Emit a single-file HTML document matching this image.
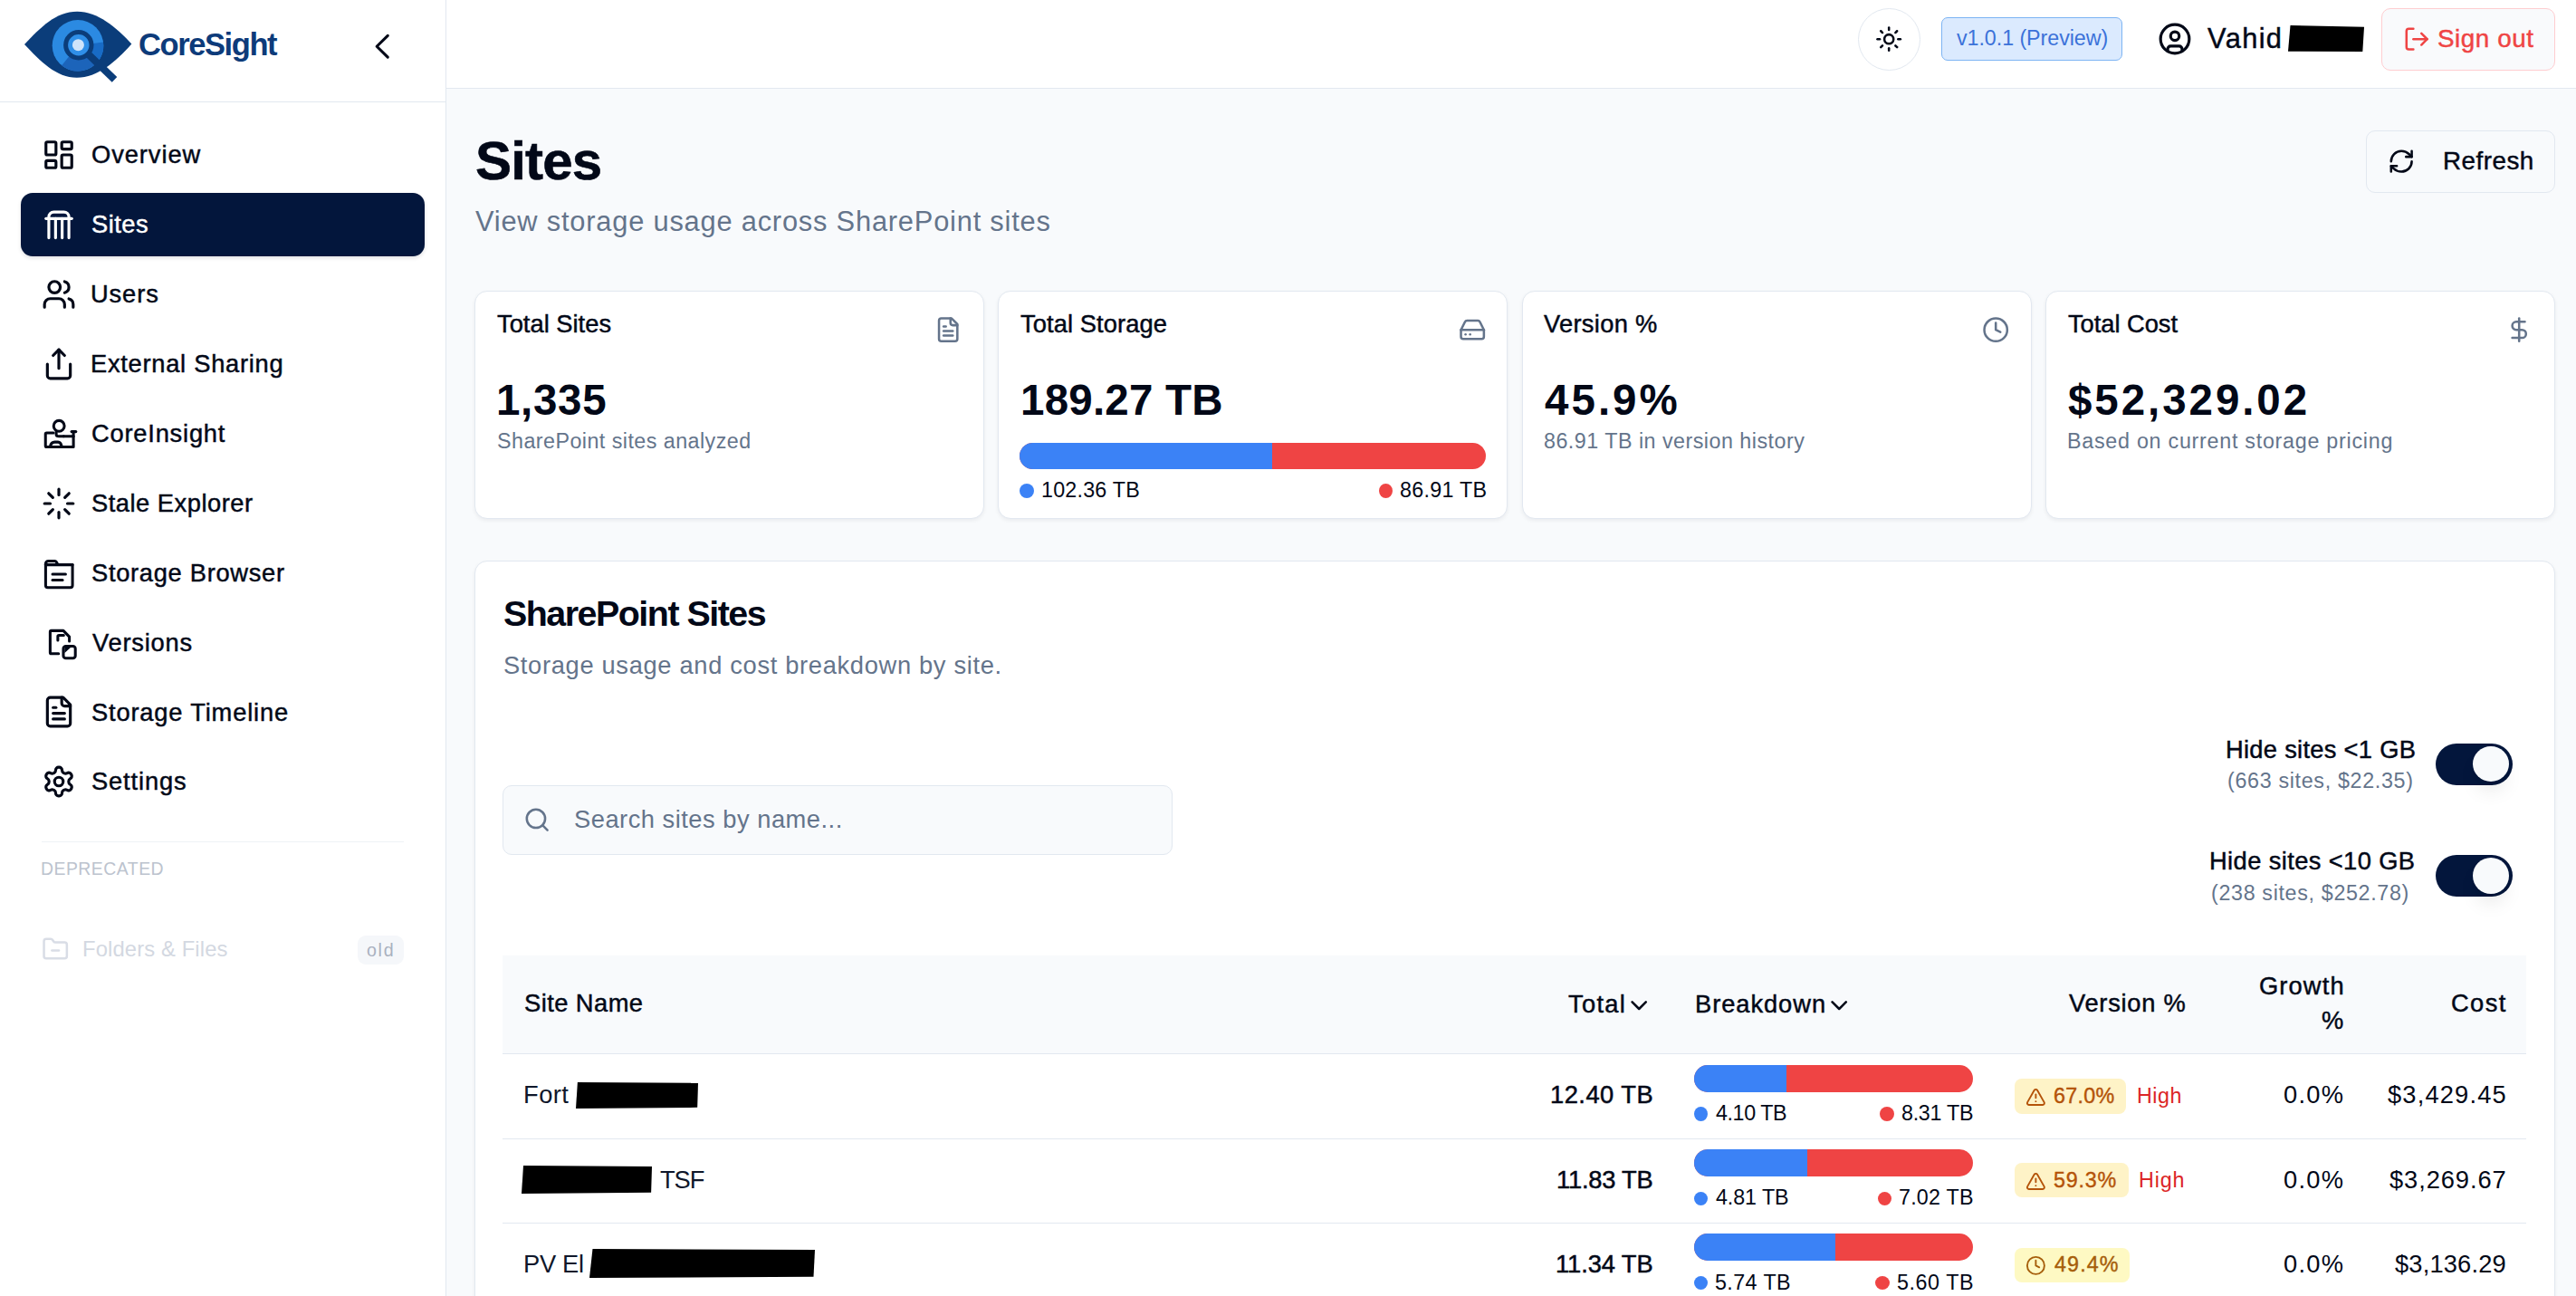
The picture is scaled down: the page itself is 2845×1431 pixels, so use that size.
<!DOCTYPE html>
<html lang="en"><head><meta charset="utf-8"><title>CoreSight – Sites</title>
<style>
*{box-sizing:border-box;margin:0;padding:0}
html,body{width:2845px;height:1431px;overflow:hidden;background:#f8fafc}
body{position:relative;font-family:"Liberation Sans", Arial, sans-serif;color:#020817}
aside,header,main,nav,section,div,a,button,svg,.t{position:absolute;display:block}
button{font:inherit;cursor:pointer}
a{text-decoration:none;color:inherit}
.t{white-space:pre;line-height:1;font-family:"Liberation Sans", Arial, sans-serif}
main{overflow:hidden}
</style></head>
<body>
<aside style="left:0px;top:0px;width:493px;height:1431px;background:#fff;border-right:1px solid #e2e8f0;">
<div style="left:0px;top:0px;width:492px;height:113px;border-bottom:1px solid #e2e8f0;">
<svg style="left:20px;top:5px;color:#020817;" width="135" height="90" viewBox="20 5 135 90" fill="none" stroke="none" stroke-width="0" stroke-linecap="round" stroke-linejoin="round"><path d="M27 49C45 30 62 12.8 85.2 12.8C108 12.8 128 30 145.3 48.5C128 68 108 85.7 84.8 85.7C62 85.7 45 68 27 49Z" fill="#0b3d7a"/><circle cx="86" cy="50.3" r="28.3" fill="#2b8ae2"/><path d="M86 50.3L114 46.4A28.3 28.3 0 0 1 107.7 68.5Z" fill="#186bc6"/><path d="M86 50.3L107.7 68.5A28.3 28.3 0 0 1 68.2 72.3Z" fill="#1c64ba"/><circle cx="86.8" cy="49.7" r="14.2" fill="#2f8fe8" stroke="#0b3d7a" stroke-width="5"/><circle cx="86.4" cy="49.7" r="6.5" fill="#cfe4fa"/><path d="M98.5 61L123.6 85.2" stroke="#0b3d7a" stroke-width="8" stroke-linecap="square" stroke-linejoin="round" fill="none"/></svg>
<span class="t" style="left:153px;top:32px;font-size:34.5px;font-weight:700;color:#0d3b7a;letter-spacing:-1.413px;">CoreSight</span>
<svg style="left:400px;top:30px;color:#020817;" width="44" height="44" viewBox="400 30 44 44" fill="none" stroke="currentColor" stroke-width="3.1" stroke-linecap="round" stroke-linejoin="round"><path d="M428.25 39.45L416.15 51.25L428.25 63.05"/></svg>
</div>
<nav style="left:0px;top:113px;width:492px;height:800px;">
<a style="left:23px;top:23px;width:446px;height:70px;border-radius:13px;">
<svg style="left:23px;top:16px;color:#020817;" width="38" height="38" viewBox="0 0 24 24" fill="none" stroke="currentColor" stroke-width="2" stroke-linecap="round" stroke-linejoin="round"><rect width="7" height="9" x="3" y="3" rx="1"/><rect width="7" height="5" x="14" y="3" rx="1"/><rect width="7" height="9" x="14" y="12" rx="1"/><rect width="7" height="5" x="3" y="16" rx="1"/></svg>
<span class="t" style="left:78px;top:21px;font-size:27.3px;font-weight:500;color:#020817;letter-spacing:0.929px;-webkit-text-stroke:0.45px #020817;">Overview</span>
</a>
<a style="left:23px;top:100px;width:446px;height:70px;border-radius:13px;background:#03163c;box-shadow:0 2px 4px rgba(2,8,23,.12);">
<svg style="left:23px;top:15.9px;color:#ffffff;" width="38" height="38" viewBox="0 0 24 24" fill="none" stroke="currentColor" stroke-width="2" stroke-linecap="round" stroke-linejoin="round"><path d="M5 21.2V6.7A3.5 3.5 0 0 1 8.5 3.2h7A3.5 3.5 0 0 1 19 6.7V21.2"/><path d="M3 7.8h18"/><path d="M9.7 7.8V21.2"/><path d="M14.3 7.8V21.2"/></svg>
<span class="t" style="left:78px;top:21px;font-size:27.3px;font-weight:500;color:#ffffff;letter-spacing:0.500px;-webkit-text-stroke:0.45px #ffffff;">Sites</span>
</a>
<a style="left:23px;top:177px;width:446px;height:70px;border-radius:13px;">
<svg style="left:23px;top:15.8px;color:#020817;" width="38" height="38" viewBox="0 0 24 24" fill="none" stroke="currentColor" stroke-width="2" stroke-linecap="round" stroke-linejoin="round"><path d="M16 21v-2a4 4 0 0 0-4-4H6a4 4 0 0 0-4 4v2"/><circle cx="9" cy="7" r="4"/><path d="M22 21v-2a4 4 0 0 0-3-3.87"/><path d="M16 3.13a4 4 0 0 1 0 7.75"/></svg>
<span class="t" style="left:77px;top:21px;font-size:27.3px;font-weight:500;color:#020817;letter-spacing:0.875px;-webkit-text-stroke:0.45px #020817;">Users</span>
</a>
<a style="left:23px;top:254px;width:446px;height:70px;border-radius:13px;">
<svg style="left:23px;top:15.7px;color:#020817;" width="38" height="38" viewBox="0 0 24 24" fill="none" stroke="currentColor" stroke-width="2" stroke-linecap="round" stroke-linejoin="round"><path d="M4 12v8a2 2 0 0 0 2 2h12a2 2 0 0 0 2-2v-8"/><polyline points="16 6 12 2 8 6"/><line x1="12" x2="12" y1="2" y2="15"/></svg>
<span class="t" style="left:77px;top:21px;font-size:27.3px;font-weight:500;color:#020817;letter-spacing:0.720px;-webkit-text-stroke:0.45px #020817;">External Sharing</span>
</a>
<a style="left:23px;top:331px;width:446px;height:70px;border-radius:13px;">
<svg style="left:23.12px;top:17.26px;color:#020817;" width="39.87" height="34.78" viewBox="95 130 235 205" fill="none" stroke="currentColor" stroke-width="18" stroke-linecap="round" stroke-linejoin="round"><circle cx="208" cy="185" r="35"/><path d="M172 230H128a8 8 0 0 0-8 8v76a8 8 0 0 0 8 8h174V222"/><path d="M290 222h28"/><path d="M238 252h64"/><path d="M150 320c4-18 14-30 30-30h22c12 0 20 12 24 30"/><path d="M190 222v18c0 8 8 12 18 12h30"/></svg>
<span class="t" style="left:78px;top:21px;font-size:27.3px;font-weight:500;color:#020817;letter-spacing:0.780px;-webkit-text-stroke:0.45px #020817;">CoreInsight</span>
</a>
<a style="left:23px;top:407px;width:446px;height:70px;border-radius:13px;">
<svg style="left:23px;top:16.5px;color:#020817;" width="38" height="38" viewBox="0 0 24 24" fill="none" stroke="currentColor" stroke-width="2" stroke-linecap="round" stroke-linejoin="round"><path d="M12 2v4"/><path d="m16.2 7.8 2.9-2.9"/><path d="M18 12h4"/><path d="m16.2 16.2 2.9 2.9"/><path d="M12 18v4"/><path d="m4.9 19.1 2.9-2.9"/><path d="M2 12h4"/><path d="m4.9 4.9 2.9 2.9"/></svg>
<span class="t" style="left:78px;top:22px;font-size:27.3px;font-weight:500;color:#020817;letter-spacing:0.508px;-webkit-text-stroke:0.45px #020817;">Stale Explorer</span>
</a>
<a style="left:23px;top:484px;width:446px;height:70px;border-radius:13px;">
<svg style="left:23.97px;top:20.15px;color:#020817;" width="36.48" height="34.78" viewBox="100 1040 215 205" fill="none" stroke="currentColor" stroke-width="18" stroke-linecap="round" stroke-linejoin="round"><path d="M120 1085v-12a18 18 0 0 1 18-18h42a12 12 0 0 1 10 6l10 17h95v135a14 14 0 0 1-14 14H134a14 14 0 0 1-14-14z"/><path d="M120 1079h175"/><path d="M165 1140h85"/><path d="M165 1178h65"/></svg>
<span class="t" style="left:78px;top:22px;font-size:27.3px;font-weight:500;color:#020817;letter-spacing:0.693px;-webkit-text-stroke:0.45px #020817;">Storage Browser</span>
</a>
<a style="left:23px;top:561px;width:446px;height:70px;border-radius:13px;">
<svg style="left:29.06px;top:19.2px;color:#020817;" width="33.93" height="36.48" viewBox="130 135 200 215" fill="none" stroke="currentColor" stroke-width="18" stroke-linecap="round" stroke-linejoin="round"><path d="M205 305h-47a8 8 0 0 1-8-8V163a8 8 0 0 1 8-8h78l39 40v28"/><path d="M200 218v-25a8 8 0 0 1 8-8h30"/><rect x="236" y="256" width="78" height="78" rx="16"/><path d="M244 300l44-40h-30a14 14 0 0 0-14 14z" fill="currentColor" stroke="none"/></svg>
<span class="t" style="left:79px;top:22px;font-size:27.3px;font-weight:500;color:#020817;letter-spacing:0.771px;-webkit-text-stroke:0.45px #020817;">Versions</span>
</a>
<a style="left:23px;top:638px;width:446px;height:70px;border-radius:13px;">
<svg style="left:23px;top:16.2px;color:#020817;" width="38" height="38" viewBox="0 0 24 24" fill="none" stroke="currentColor" stroke-width="2" stroke-linecap="round" stroke-linejoin="round"><path d="M15 2H6a2 2 0 0 0-2 2v16a2 2 0 0 0 2 2h12a2 2 0 0 0 2-2V7Z"/><path d="M14 2v4a2 2 0 0 0 2 2h4"/><path d="M10 9H8"/><path d="M16 13H8"/><path d="M16 17H8"/></svg>
<span class="t" style="left:78px;top:22px;font-size:27.3px;font-weight:500;color:#020817;letter-spacing:0.820px;-webkit-text-stroke:0.45px #020817;">Storage Timeline</span>
</a>
<a style="left:23px;top:715px;width:446px;height:70px;border-radius:13px;">
<svg style="left:23px;top:16.1px;color:#020817;" width="38" height="38" viewBox="0 0 24 24" fill="none" stroke="currentColor" stroke-width="2" stroke-linecap="round" stroke-linejoin="round"><path d="M12.22 2h-.44a2 2 0 0 0-2 2v.18a2 2 0 0 1-1 1.73l-.43.25a2 2 0 0 1-2 0l-.15-.08a2 2 0 0 0-2.73.73l-.22.38a2 2 0 0 0 .73 2.73l.15.1a2 2 0 0 1 1 1.72v.51a2 2 0 0 1-1 1.74l-.15.09a2 2 0 0 0-.73 2.73l.22.38a2 2 0 0 0 2.73.73l.15-.08a2 2 0 0 1 2 0l.43.25a2 2 0 0 1 1 1.73V20a2 2 0 0 0 2 2h.44a2 2 0 0 0 2-2v-.18a2 2 0 0 1 1-1.73l.43-.25a2 2 0 0 1 2 0l.15.08a2 2 0 0 0 2.73-.73l.22-.39a2 2 0 0 0-.73-2.73l-.15-.08a2 2 0 0 1-1-1.74v-.5a2 2 0 0 1 1-1.74l.15-.09a2 2 0 0 0 .73-2.73l-.22-.38a2 2 0 0 0-2.73-.73l-.15.08a2 2 0 0 1-2 0l-.43-.25a2 2 0 0 1-1-1.73V4a2 2 0 0 0-2-2z"/><circle cx="12" cy="12" r="3"/></svg>
<span class="t" style="left:78px;top:21px;font-size:27.3px;font-weight:500;color:#020817;letter-spacing:0.857px;-webkit-text-stroke:0.45px #020817;">Settings</span>
</a>
</nav>
<div style="left:46px;top:929px;width:400px;height:1px;background:#eef2f6;"></div>
<span class="t" style="left:45px;top:950px;font-size:19.4px;font-weight:500;color:#bcc3ce;letter-spacing:0.500px;">DEPRECATED</span>
<a style="left:23px;top:1013px;width:446px;height:70px;border-radius:14px;">
<svg style="left:23px;top:20.1px;color:#d9dde6;" width="30.4" height="30.4" viewBox="0 0 24 24" fill="none" stroke="currentColor" stroke-width="2" stroke-linecap="round" stroke-linejoin="round"><path d="M9 13h6"/><path d="M20 20a2 2 0 0 0 2-2V8a2 2 0 0 0-2-2h-7.9a2 2 0 0 1-1.69-.9L9.6 3.9A2 2 0 0 0 7.93 3H4a2 2 0 0 0-2 2v13a2 2 0 0 0 2 2Z"/></svg>
<span class="t" style="left:68px;top:23px;font-size:23.8px;font-weight:400;color:#d3d8e1;letter-spacing:0.121px;">Folders &amp; Files</span>
<div style="left:372px;top:20px;width:51px;height:32px;background:#f5f7fa;border-radius:9px;"></div>
<span class="t" style="left:382px;top:27px;font-size:19.6px;font-weight:400;color:#a9b1bf;letter-spacing:1.700px;">old</span>
</a>
</aside>
<header style="left:493px;top:0px;width:2352px;height:98px;background:#fff;border-bottom:1px solid #e2e8f0;">
<button style="left:1559px;top:9px;width:69px;height:69px;border-radius:50%;border:1px solid #e2e8f0;background:#fff;">
<svg style="left:18.2px;top:18px;color:#020817;" width="30.4" height="30.4" viewBox="0 0 24 24" fill="none" stroke="currentColor" stroke-width="2" stroke-linecap="round" stroke-linejoin="round"><circle cx="12" cy="12" r="4"/><path d="M12 2v2"/><path d="M12 20v2"/><path d="m4.93 4.93 1.41 1.41"/><path d="m17.66 17.66 1.41 1.41"/><path d="M2 12h2"/><path d="M20 12h2"/><path d="m6.34 17.66-1.41 1.41"/><path d="m19.07 4.93-1.41 1.41"/></svg>
</button>
<div style="left:1651px;top:19px;width:200px;height:48px;background:#dbeafe;border:1px solid #7db4f3;border-radius:7px;">
<span class="t" style="left:16px;top:11px;font-size:23.3px;font-weight:400;color:#3b72d9;letter-spacing:-0.073px;">v1.0.1 (Preview)</span>
</div>
<svg style="left:1890.4px;top:23.8px;color:#020817;" width="38" height="38" viewBox="0 0 24 24" fill="none" stroke="currentColor" stroke-width="2" stroke-linecap="round" stroke-linejoin="round"><circle cx="12" cy="12" r="10"/><circle cx="12" cy="10" r="3"/><path d="M7 20.662V19a2 2 0 0 1 2-2h6a2 2 0 0 1 2 2v1.662"/></svg>
<span class="t" style="left:1945px;top:28px;font-size:30.8px;font-weight:500;color:#020817;letter-spacing:1.375px;-webkit-text-stroke:0.45px #020817;">Vahid</span>
<div style="left:2034px;top:28px;width:84px;height:29px;background:#000;clip-path:polygon(3% 0,100% 6%,98% 100%,0 99%);"></div>
<button style="left:2137px;top:9px;width:192px;height:69px;background:#f9fafc;border:1px solid #fecdd0;border-radius:10px;">
<svg style="left:23.1px;top:18.1px;color:#ef4444;" width="30.4" height="30.4" viewBox="0 0 24 24" fill="none" stroke="currentColor" stroke-width="2" stroke-linecap="round" stroke-linejoin="round"><path d="M9 21H5a2 2 0 0 1-2-2V5a2 2 0 0 1 2-2h4"/><polyline points="16 17 21 12 16 7"/><line x1="21" x2="9" y1="12" y2="12"/></svg>
<span class="t" style="left:61px;top:19px;font-size:27.8px;font-weight:500;color:#ef4444;letter-spacing:0.557px;-webkit-text-stroke:0.45px #ef4444;">Sign out</span>
</button>
</header>
<main style="left:493px;top:98px;width:2352px;height:1333px;background:#f8fafc;">
<h1 class="t" style="left:32px;top:50px;font-size:60px;font-weight:700;color:#020817;letter-spacing:-0.825px;-webkit-text-stroke:0.6px #020817;">Sites</h1>
<p class="t" style="left:32px;top:132px;font-size:30.8px;font-weight:400;color:#64748b;letter-spacing:0.802px;">View storage usage across SharePoint sites</p>
<button style="left:2120px;top:46px;width:209px;height:69px;background:#f8fafc;border:1px solid #e2e8f0;border-radius:10px;">
<svg style="left:23.2px;top:18px;color:#020817;" width="30.4" height="30.4" viewBox="0 0 24 24" fill="none" stroke="currentColor" stroke-width="2" stroke-linecap="round" stroke-linejoin="round"><path d="M3 12a9 9 0 0 1 9-9 9.75 9.75 0 0 1 6.74 2.74L21 8"/><path d="M21 3v5h-5"/><path d="M21 12a9 9 0 0 1-9 9 9.75 9.75 0 0 1-6.74-2.74L3 16"/><path d="M8 16H3v5"/></svg>
<span class="t" style="left:84px;top:19px;font-size:27.8px;font-weight:500;color:#020817;letter-spacing:0.500px;-webkit-text-stroke:0.45px #020817;">Refresh</span>
</button>
<section style="left:31px;top:223px;width:563px;height:252px;background:#fff;border:1px solid #e2e8f0;border-radius:14px;box-shadow:0 2px 4px rgba(15,23,42,.06);">
<h3 class="t" style="left:24px;top:22px;font-size:27.3px;font-weight:500;color:#020817;letter-spacing:0.010px;-webkit-text-stroke:0.45px #020817;">Total Sites</h3>
<svg style="left:507.2px;top:27.2px;color:#64748b;" width="30.4" height="30.4" viewBox="0 0 24 24" fill="none" stroke="currentColor" stroke-width="2" stroke-linecap="round" stroke-linejoin="round"><path d="M15 2H6a2 2 0 0 0-2 2v16a2 2 0 0 0 2 2h12a2 2 0 0 0 2-2V7Z"/><path d="M14 2v4a2 2 0 0 0 2 2h4"/><path d="M10 9H8"/><path d="M16 13H8"/><path d="M16 17H8"/></svg>
<span class="t" style="left:23px;top:96px;font-size:47.5px;font-weight:700;color:#020817;letter-spacing:0.675px;">1,335</span>
<p class="t" style="left:24px;top:154px;font-size:23.3px;font-weight:400;color:#64748b;letter-spacing:0.450px;">SharePoint sites analyzed</p>
</section>
<section style="left:609px;top:223px;width:563px;height:252px;background:#fff;border:1px solid #e2e8f0;border-radius:14px;box-shadow:0 2px 4px rgba(15,23,42,.06);">
<h3 class="t" style="left:24px;top:22px;font-size:27.3px;font-weight:500;color:#020817;letter-spacing:0.092px;-webkit-text-stroke:0.45px #020817;">Total Storage</h3>
<svg style="left:507.5px;top:27.2px;color:#64748b;" width="30.4" height="30.4" viewBox="0 0 24 24" fill="none" stroke="currentColor" stroke-width="2" stroke-linecap="round" stroke-linejoin="round"><line x1="22" x2="2" y1="12" y2="12"/><path d="M5.45 5.11 2 12v6a2 2 0 0 0 2 2h16a2 2 0 0 0 2-2v-6l-3.45-6.89A2 2 0 0 0 16.76 4H7.24a2 2 0 0 0-1.79 1.11z"/><line x1="6" x2="6.01" y1="16" y2="16"/><line x1="10" x2="10.01" y1="16" y2="16"/></svg>
<span class="t" style="left:24px;top:96px;font-size:47.5px;font-weight:700;color:#020817;letter-spacing:0.225px;">189.27 TB</span>
<div style="left:23px;top:167px;width:515px;height:29px;border-radius:15px;overflow:hidden;background:#ef4444;">
<div style="left:0px;top:0px;width:279px;height:29px;background:#3b82f6;"></div>
</div>
<div style="left:23px;top:212px;width:16px;height:16px;background:#3b82f6;border-radius:50%;"></div>
<span class="t" style="left:47px;top:208px;font-size:23.3px;font-weight:400;color:#020817;letter-spacing:0.213px;">102.36 TB</span>
<div style="left:420px;top:212px;width:15px;height:16px;background:#ef4444;border-radius:50%;"></div>
<span class="t" style="left:443px;top:208px;font-size:23.3px;font-weight:400;color:#020817;letter-spacing:0.286px;">86.91 TB</span>
</section>
<section style="left:1188px;top:223px;width:563px;height:252px;background:#fff;border:1px solid #e2e8f0;border-radius:14px;box-shadow:0 2px 4px rgba(15,23,42,.06);">
<h3 class="t" style="left:23px;top:22px;font-size:27.3px;font-weight:500;color:#020817;letter-spacing:0.300px;-webkit-text-stroke:0.45px #020817;">Version %</h3>
<svg style="left:506.8px;top:27.2px;color:#64748b;" width="30.4" height="30.4" viewBox="0 0 24 24" fill="none" stroke="currentColor" stroke-width="2" stroke-linecap="round" stroke-linejoin="round"><circle cx="12" cy="12" r="10"/><polyline points="12 6 12 12 16 14"/></svg>
<span class="t" style="left:24px;top:96px;font-size:47.5px;font-weight:700;color:#020817;letter-spacing:3.025px;">45.9%</span>
<p class="t" style="left:23px;top:154px;font-size:23.3px;font-weight:400;color:#64748b;letter-spacing:0.477px;">86.91 TB in version history</p>
</section>
<section style="left:1766px;top:223px;width:563px;height:252px;background:#fff;border:1px solid #e2e8f0;border-radius:14px;box-shadow:0 2px 4px rgba(15,23,42,.06);">
<h3 class="t" style="left:24px;top:22px;font-size:27.3px;font-weight:500;color:#020817;letter-spacing:-0.033px;-webkit-text-stroke:0.45px #020817;">Total Cost</h3>
<svg style="left:507.1px;top:27.2px;color:#64748b;" width="30.4" height="30.4" viewBox="0 0 24 24" fill="none" stroke="currentColor" stroke-width="2" stroke-linecap="round" stroke-linejoin="round"><line x1="12" x2="12" y1="2" y2="22"/><path d="M17 5H9.5a3.5 3.5 0 0 0 0 7h5a3.5 3.5 0 0 1 0 7H6"/></svg>
<span class="t" style="left:24px;top:96px;font-size:47.5px;font-weight:700;color:#020817;letter-spacing:2.933px;">$52,329.02</span>
<p class="t" style="left:23px;top:154px;font-size:23.3px;font-weight:400;color:#64748b;letter-spacing:0.732px;">Based on current storage pricing</p>
</section>
<section style="left:31px;top:521px;width:2298px;height:900px;background:#fff;border:1px solid #e2e8f0;border-radius:14px;box-shadow:0 2px 4px rgba(15,23,42,.06);">
<h2 class="t" style="left:31px;top:38px;font-size:39.4px;font-weight:700;color:#020817;letter-spacing:-1.493px;">SharePoint Sites</h2>
<p class="t" style="left:31px;top:101px;font-size:27.3px;font-weight:400;color:#64748b;letter-spacing:0.665px;">Storage usage and cost breakdown by site.</p>
<div style="left:30px;top:247px;width:740px;height:77px;background:#f8fafc;border:1px solid #e2e8f0;border-radius:10px;">
<svg style="left:22.2px;top:22.1px;color:#64748b;" width="30.4" height="30.4" viewBox="0 0 24 24" fill="none" stroke="currentColor" stroke-width="2" stroke-linecap="round" stroke-linejoin="round"><circle cx="11" cy="11" r="8"/><path d="m21 21-4.3-4.3"/></svg>
<span class="t" style="left:78px;top:23px;font-size:27.3px;font-weight:400;color:#64748b;letter-spacing:0.500px;">Search sites by name...</span>
</div>
<span class="t" style="left:1933px;top:194px;font-size:27.3px;font-weight:500;color:#020817;letter-spacing:0.287px;-webkit-text-stroke:0.45px #020817;">Hide sites &lt;1 GB</span>
<span class="t" style="left:1935px;top:231px;font-size:23.3px;font-weight:400;color:#64748b;letter-spacing:0.667px;">(663 sites, $22.35)</span>
<div style="left:2165px;top:201px;width:85px;height:46px;background:#03163c;border-radius:23.2px;">
<div style="left:41px;top:3px;width:40px;height:39px;background:#f8fafc;border-radius:50%;box-shadow:0 14px 22px -5px rgba(0,0,0,.1),0 6px 9px -6px rgba(0,0,0,.1);"></div>
</div>
<span class="t" style="left:1915px;top:317px;font-size:27.3px;font-weight:500;color:#020817;letter-spacing:0.394px;-webkit-text-stroke:0.45px #020817;">Hide sites &lt;10 GB</span>
<span class="t" style="left:1917px;top:355px;font-size:23.3px;font-weight:400;color:#64748b;letter-spacing:0.653px;">(238 sites, $252.78)</span>
<div style="left:2165px;top:324px;width:85px;height:46px;background:#03163c;border-radius:23.2px;">
<div style="left:41px;top:3px;width:40px;height:40px;background:#f8fafc;border-radius:50%;box-shadow:0 14px 22px -5px rgba(0,0,0,.1),0 6px 9px -6px rgba(0,0,0,.1);"></div>
</div>
<div role="table" style="left:30px;top:435px;width:2235px;height:400px;">
<div role="row" style="left:0px;top:0px;width:2235px;height:109px;background:#f8fafc;border-bottom:1px solid #e2e8f0;">
<span class="t" style="left:24px;top:39px;font-size:27.3px;font-weight:500;color:#020817;letter-spacing:0.450px;-webkit-text-stroke:0.45px #020817;">Site Name</span>
<span class="t" style="left:1177px;top:40px;font-size:27.3px;font-weight:500;color:#020817;letter-spacing:1.300px;-webkit-text-stroke:0.45px #020817;">Total</span>
<svg style="left:1239.8px;top:39.55px;color:#020817;" width="30.4" height="30.4" viewBox="0 0 24 24" fill="none" stroke="currentColor" stroke-width="2" stroke-linecap="round" stroke-linejoin="round"><path d="m6 9 6 6 6-6"/></svg>
<span class="t" style="left:1317px;top:40px;font-size:27.3px;font-weight:500;color:#020817;letter-spacing:0.938px;-webkit-text-stroke:0.45px #020817;">Breakdown</span>
<svg style="left:1461.4px;top:39.55px;color:#020817;" width="30.4" height="30.4" viewBox="0 0 24 24" fill="none" stroke="currentColor" stroke-width="2" stroke-linecap="round" stroke-linejoin="round"><path d="m6 9 6 6 6-6"/></svg>
<span class="t" style="left:1730px;top:39px;font-size:27.3px;font-weight:500;color:#020817;letter-spacing:0.725px;-webkit-text-stroke:0.45px #020817;">Version %</span>
<span class="t" style="left:1940px;top:20px;font-size:27.3px;font-weight:500;color:#020817;letter-spacing:1.120px;-webkit-text-stroke:0.45px #020817;">Growth</span>
<span class="t" style="left:2009px;top:58px;font-size:27.3px;font-weight:500;color:#020817;letter-spacing:-0.400px;-webkit-text-stroke:0.45px #020817;">%</span>
<span class="t" style="left:2152px;top:39px;font-size:27.3px;font-weight:500;color:#020817;letter-spacing:1.367px;-webkit-text-stroke:0.45px #020817;">Cost</span>
</div>
<div role="row" style="left:0px;top:109px;width:2235px;height:94px;border-bottom:1px solid #e2e8f0;">
<span class="t" style="left:23px;top:31px;font-size:27.3px;font-weight:400;color:#0f172a;letter-spacing:0.467px;">Fort</span>
<div style="left:81px;top:31px;width:135px;height:29px;background:#000;clip-path:polygon(1.4% 0,100% 3%,99.4% 96%,0 100%);"></div>
<span class="t" style="left:1157px;top:31px;font-size:27.3px;font-weight:500;color:#020817;letter-spacing:0.486px;-webkit-text-stroke:0.5px #020817;">12.40 TB</span>
<div style="left:1316px;top:12px;width:308px;height:30px;border-radius:15px;overflow:hidden;background:#ef4444;">
<div style="left:0px;top:0px;width:102px;height:30px;background:#3b82f6;"></div>
</div>
<div style="left:1316px;top:58px;width:15px;height:16px;background:#3b82f6;border-radius:50%;"></div>
<span class="t" style="left:1340px;top:54px;font-size:23.3px;font-weight:400;color:#020817;letter-spacing:-0.417px;">4.10 TB</span>
<div style="left:1521px;top:58px;width:16px;height:16px;background:#ef4444;border-radius:50%;"></div>
<span class="t" style="left:1545px;top:54px;font-size:23.3px;font-weight:400;color:#020817;letter-spacing:-0.283px;">8.31 TB</span>
<div style="left:1670px;top:27px;width:123px;height:39px;background:#fef3c7;border-radius:8px;">
<svg style="left:12.2px;top:8.8px;color:#b45309;" width="22.8" height="22.8" viewBox="0 0 24 24" fill="none" stroke="currentColor" stroke-width="2" stroke-linecap="round" stroke-linejoin="round"><path d="m21.73 18-8-14a2 2 0 0 0-3.48 0l-8 14A2 2 0 0 0 4 21h16a2 2 0 0 0 1.73-3"/><path d="M12 9v4"/><path d="M12 17h.01"/></svg>
<span class="t" style="left:43px;top:8px;font-size:23.3px;font-weight:500;color:#b45309;letter-spacing:0.300px;-webkit-text-stroke:0.4px #b45309;">67.0%</span>
</div>
<span class="t" style="left:1805px;top:35px;font-size:23.3px;font-weight:400;color:#dc2626;letter-spacing:0.533px;">High</span>
<span class="t" style="left:1967px;top:31px;font-size:27.3px;font-weight:400;color:#020817;letter-spacing:1.267px;">0.0%</span>
<span class="t" style="left:2082px;top:31px;font-size:27.3px;font-weight:400;color:#020817;letter-spacing:1.163px;">$3,429.45</span>
</div>
<div role="row" style="left:0px;top:203px;width:2235px;height:93px;border-bottom:1px solid #e2e8f0;">
<div style="left:21px;top:29px;width:144px;height:31px;background:#000;clip-path:polygon(1.4% 0,100% 3%,99.4% 96%,0 100%);"></div>
<span class="t" style="left:174px;top:31px;font-size:27.3px;font-weight:400;color:#0f172a;letter-spacing:-1.050px;">TSF</span>
<span class="t" style="left:1164px;top:31px;font-size:27.3px;font-weight:500;color:#020817;letter-spacing:-0.229px;-webkit-text-stroke:0.5px #020817;">11.83 TB</span>
<div style="left:1316px;top:11px;width:308px;height:30px;border-radius:15px;overflow:hidden;background:#ef4444;">
<div style="left:0px;top:0px;width:125px;height:30px;background:#3b82f6;"></div>
</div>
<div style="left:1316px;top:58px;width:15px;height:15px;background:#3b82f6;border-radius:50%;"></div>
<span class="t" style="left:1340px;top:53px;font-size:23.3px;font-weight:400;color:#020817;letter-spacing:-0.100px;">4.81 TB</span>
<div style="left:1519px;top:58px;width:15px;height:15px;background:#ef4444;border-radius:50%;"></div>
<span class="t" style="left:1542px;top:53px;font-size:23.3px;font-weight:400;color:#020817;letter-spacing:0.217px;">7.02 TB</span>
<div style="left:1670px;top:26px;width:126px;height:38px;background:#fef3c7;border-radius:8px;">
<svg style="left:12.2px;top:9px;color:#b45309;" width="22.8" height="22.8" viewBox="0 0 24 24" fill="none" stroke="currentColor" stroke-width="2" stroke-linecap="round" stroke-linejoin="round"><path d="m21.73 18-8-14a2 2 0 0 0-3.48 0l-8 14A2 2 0 0 0 4 21h16a2 2 0 0 0 1.73-3"/><path d="M12 9v4"/><path d="M12 17h.01"/></svg>
<span class="t" style="left:43px;top:8px;font-size:23.3px;font-weight:500;color:#b45309;letter-spacing:0.800px;-webkit-text-stroke:0.4px #b45309;">59.3%</span>
</div>
<span class="t" style="left:1807px;top:34px;font-size:23.3px;font-weight:400;color:#dc2626;letter-spacing:0.867px;">High</span>
<span class="t" style="left:1967px;top:31px;font-size:27.3px;font-weight:400;color:#020817;letter-spacing:1.267px;">0.0%</span>
<span class="t" style="left:2084px;top:31px;font-size:27.3px;font-weight:400;color:#020817;letter-spacing:0.913px;">$3,269.67</span>
</div>
<div role="row" style="left:0px;top:296px;width:2235px;height:93px;border-bottom:1px solid #e2e8f0;">
<span class="t" style="left:23px;top:31px;font-size:27.3px;font-weight:400;color:#0f172a;letter-spacing:-0.325px;">PV El</span>
<div style="left:96px;top:28px;width:249px;height:32px;background:#000;clip-path:polygon(1.4% 0,100% 3%,99.4% 96%,0 100%);"></div>
<span class="t" style="left:1163px;top:31px;font-size:27.3px;font-weight:500;color:#020817;letter-spacing:-0.086px;-webkit-text-stroke:0.5px #020817;">11.34 TB</span>
<div style="left:1316px;top:11px;width:308px;height:30px;border-radius:15px;overflow:hidden;background:#ef4444;">
<div style="left:0px;top:0px;width:156px;height:30px;background:#3b82f6;"></div>
</div>
<div style="left:1316px;top:58px;width:15px;height:15px;background:#3b82f6;border-radius:50%;"></div>
<span class="t" style="left:1339px;top:54px;font-size:23.3px;font-weight:400;color:#020817;letter-spacing:0.400px;">5.74 TB</span>
<div style="left:1516px;top:58px;width:16px;height:15px;background:#ef4444;border-radius:50%;"></div>
<span class="t" style="left:1540px;top:54px;font-size:23.3px;font-weight:400;color:#020817;letter-spacing:0.550px;">5.60 TB</span>
<div style="left:1670px;top:27px;width:127px;height:38px;background:#fef9c3;border-radius:8px;">
<svg style="left:12.2px;top:8.2px;color:#a65e0b;" width="22.8" height="22.8" viewBox="0 0 24 24" fill="none" stroke="currentColor" stroke-width="2" stroke-linecap="round" stroke-linejoin="round"><circle cx="12" cy="12" r="10"/><polyline points="12 6 12 12 16 14"/></svg>
<span class="t" style="left:44px;top:7px;font-size:23.3px;font-weight:500;color:#a65e0b;letter-spacing:1.125px;-webkit-text-stroke:0.4px #a65e0b;">49.4%</span>
</div>
<span class="t" style="left:1967px;top:31px;font-size:27.3px;font-weight:400;color:#020817;letter-spacing:1.267px;">0.0%</span>
<span class="t" style="left:2090px;top:31px;font-size:27.3px;font-weight:400;color:#020817;letter-spacing:0.163px;">$3,136.29</span>
</div>
</div>
</section>
</main>
</body></html>
